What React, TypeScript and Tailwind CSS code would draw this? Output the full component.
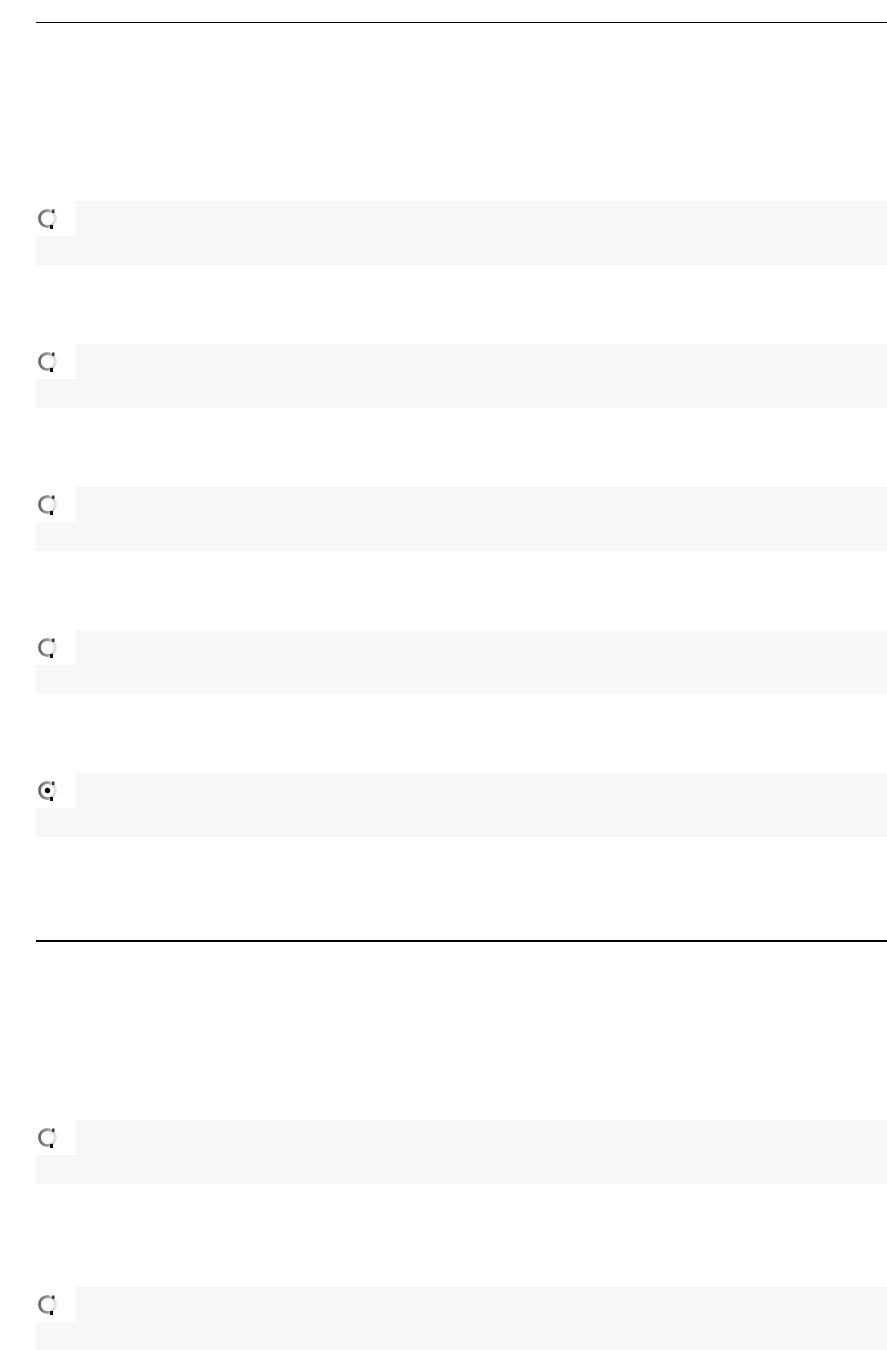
import React from "react";

function Radio({ checked }: { checked?: boolean }) {
  return (
    <svg width="20" height="21" viewBox="0 0 20 21" className="block">
      <defs>
        <linearGradient id={checked ? "rg-on" : "rg-off"} x1="0" y1="0" x2="1" y2="0">
          <stop offset="0" stopColor="#666666" />
          <stop offset="0.5" stopColor="#9c9c9c" />
          <stop offset="1" stopColor="#e4e4e4" />
        </linearGradient>
      </defs>
      <circle
        cx="9.5"
        cy="10.5"
        r="8"
        fill="#fdfdfd"
        stroke={`url(#${checked ? "rg-on" : "rg-off"})`}
        strokeWidth="2.8"
      />
      <rect x="14" y="1.5" width="2.5" height="3.5" fill="#3a3a3a" />
      <rect x="12" y="17" width="3" height="4" fill="#111" />
      {checked && <circle cx="9.5" cy="10.5" r="2.7" fill="#000" />}
    </svg>
  );
}

function Row({ checked, className }: { checked?: boolean; className: string }) {
  return (
    <div className={`flex flex-col h-[64px] ${className}`}>
      <div className="flex h-[35px]">
        <div className="w-[40px] h-full bg-white pl-[2px] pt-[7px]">
          <Radio checked={checked} />
        </div>
        <div className="flex-1 bg-[#f7f7f7]" />
      </div>
      <div className="flex-1 bg-[#f7f7f7]" />
    </div>
  );
}

export default function App() {
  return (
    <div className="min-h-[1350px] bg-white pl-[36px] pt-[22px] font-['Liberation_Sans',sans-serif]">
      <section>
        <div className="h-px bg-black" />
        <Row className="mt-[178px]" />
        <Row className="mt-[79px]" />
        <Row className="mt-[79px]" />
        <Row className="mt-[79px]" />
        <Row className="mt-[79px]" checked />
      </section>
      <section className="mt-[103px]">
        <div className="h-[2px] bg-black" />
        <Row className="mt-[178px]" />
        <Row className="mt-[103px]" />
      </section>
    </div>
  );
}
